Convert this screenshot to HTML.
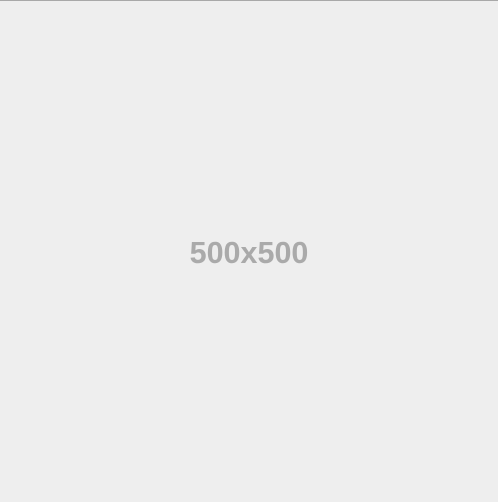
<!DOCTYPE html>
<html><head><style>
html,body{margin:0;padding:0}
body{width:498px;height:502px;background:#eeeeee;position:relative;overflow:hidden}
.top{position:absolute;left:0;top:0;width:498px;height:1px;background:#a8a8a8}
.t{position:absolute;left:0;width:498px;top:236px;text-align:center;font:bold 30.5px/34px "Liberation Sans",Arial,sans-serif;color:#aaaaaa}
</style></head><body>
<div class="top"></div>
<div class="t">500x500</div>
</body></html>
